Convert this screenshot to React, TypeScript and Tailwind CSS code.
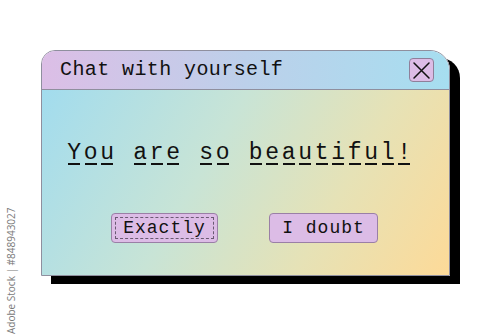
const MONO = "font-['Liberation_Mono','DejaVu_Sans_Mono',monospace]";

function CloseIcon() {
  return (
    <svg width="19" height="19" viewBox="0 0 19 19" fill="none">
      <path d="M2 2L17 17M17 2L2 17" stroke="#111" strokeWidth="1.5" strokeLinecap="round" />
    </svg>
  );
}

function DashedWord({ word }: { word: string }) {
  return (
    <span className="inline-flex">
      {word.split("").map((ch, i) => (
        <span key={i} className="flex w-[16.5px] flex-col items-center">
          <span className="leading-[20px]">{ch}</span>
          <span className="h-[2px] w-[12px] bg-[#111]" />
        </span>
      ))}
    </span>
  );
}

export default function App() {
  const words = ["You", "are", "so", "beautiful!"];

  return (
    <div className="relative h-[334px] w-[500px] overflow-hidden bg-white pl-[41px] pt-[50px]">
      <div className="absolute bottom-[0px] left-[5px] origin-bottom-left -rotate-90 translate-x-[14px] whitespace-nowrap font-['Open_Sans',sans-serif] text-[10px] text-[#7a7a7a]">
        Adobe Stock | #848943027
      </div>

      <div className="flex h-[226px] w-[409px] flex-col overflow-hidden rounded-tl-[14px] rounded-tr-[20px] border border-[#8f8f9e] shadow-[10px_8px_0_#000]">
        <div className="flex h-[39px] shrink-0 items-center justify-between border-b border-[#8f8f9e] bg-gradient-to-r from-[#dcbee6] via-[#bcd0ea] to-[#a6def0] pl-[18px] pr-[15px]">
          <span className={`${MONO} text-[20px] tracking-[0.4px] text-[#111]`}>Chat with yourself</span>
          <button className="flex h-[24px] w-[25px] items-center justify-center rounded-[4px] border border-[#8f7f9a] bg-[#dcbce6]">
            <CloseIcon />
          </button>
        </div>

        <div className="flex flex-1 flex-col bg-[linear-gradient(120deg,#a2dcee_0%,#c8e4d6_40%,#e6e2b6_70%,#fdda98_100%)]">
          <div className={`${MONO} mt-[53px] flex gap-[16.5px] pl-[24px] text-[23px] text-[#111]`}>
            {words.map((w) => (
              <DashedWord key={w} word={w} />
            ))}
          </div>

          <div className={`${MONO} mt-[48px] flex gap-[51px] pl-[69px] text-[18px] tracking-[1px] text-[#111]`}>
            <button className="h-[30px] w-[107px] rounded-[4px] border border-[#9a7fa6] bg-[#dcbce6] p-[3px]">
              <span className="flex h-full w-full items-center justify-center border border-dashed border-[#6a5a72]">
                Exactly
              </span>
            </button>
            <button className="flex h-[30px] w-[109px] items-center justify-center rounded-[4px] border border-[#9a7fa6] bg-[#dcbce6]">
              I doubt
            </button>
          </div>
        </div>
      </div>
    </div>
  );
}
